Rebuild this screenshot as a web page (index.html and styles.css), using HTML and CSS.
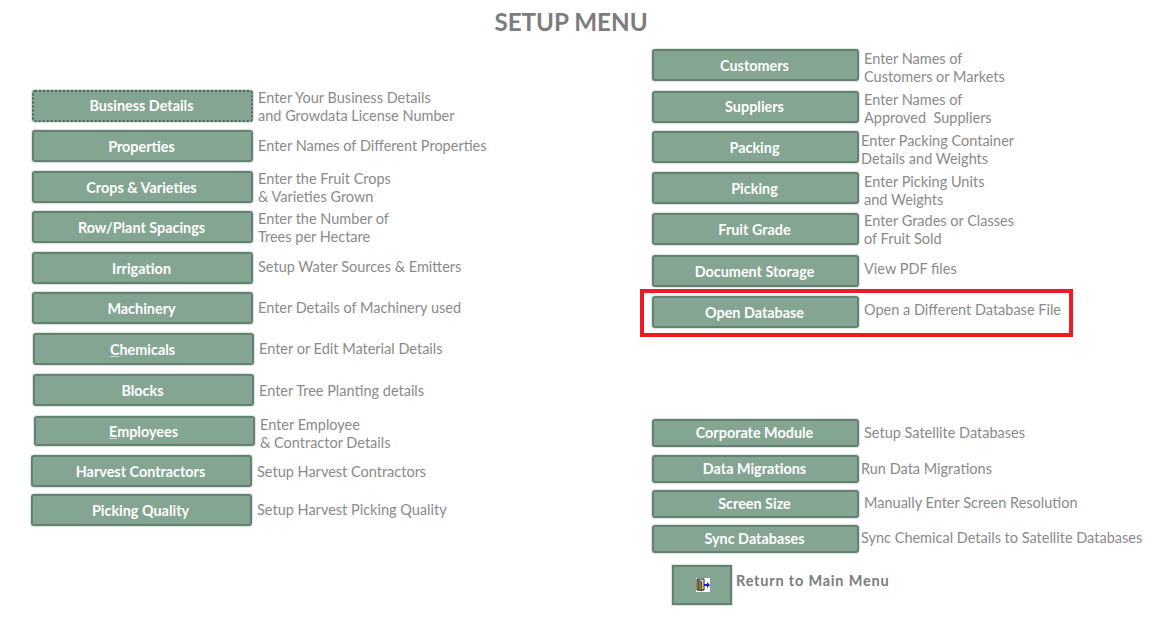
FILE: index.html
```html
<!DOCTYPE html>
<html lang="en">
<head>
<meta charset="utf-8">
<title>Setup Menu</title>
<link rel="stylesheet" href="styles.css">
</head>
<body>
<h1 class="title">SETUP MENU</h1>
<main class="columns">
  <section class="col col-left">
    <div class="row gap-0"><button class="btn btn-focus">Business Details</button><p class="desc down-1">Enter Your Business Details<br>and Growdata License Number</p></div>
    <div class="row gap-8"><button class="btn">Properties</button><p class="desc">Enter Names of Different Properties</p></div>
    <div class="row gap-9"><button class="btn">Crops &amp; Varieties</button><p class="desc down-1">Enter the Fruit Crops<br>&amp; Varieties Grown</p></div>
    <div class="row gap-8"><button class="btn">Row/Plant Spacings</button><p class="desc down-1">Enter the Number of<br>Trees per Hectare</p></div>
    <div class="row gap-9"><button class="btn">Irrigation</button><p class="desc up-1">Setup Water Sources &amp; Emitters</p></div>
    <div class="row gap-8"><button class="btn">Machinery</button><p class="desc">Enter Details of Machinery used</p></div>
    <div class="row gap-9 shift-1"><button class="btn"><u>C</u>hemicals</button><p class="desc">Enter or Edit Material Details</p></div>
    <div class="row gap-9 shift-1"><button class="btn">Blocks</button><p class="desc down-1">Enter Tree Planting details</p></div>
    <div class="row row-short gap-10 shift-2"><button class="btn"><u>E</u>mployees</button><p class="desc down-3">Enter Employee<br>&amp; Contractor Details</p></div>
    <div class="row gap-9 shift-back"><button class="btn">Harvest Contractors</button><p class="desc down-1">Setup Harvest Contractors</p></div>
    <div class="row gap-7 shift-back"><button class="btn">Picking Quality</button><p class="desc">Setup Harvest Picking Quality</p></div>
  </section>
  <section class="col col-right">
    <div class="row gap-0"><button class="btn">Customers</button><p class="desc down-3">Enter Names of<br>Customers or Markets</p></div>
    <div class="row gap-10"><button class="btn btn-raised">Suppliers</button><p class="desc down-2">Enter Names of<br>Approved&nbsp; Suppliers</p></div>
    <div class="row gap-8"><button class="btn">Packing</button><p class="desc tight down-3">Enter Packing Container<br>Details and Weights</p></div>
    <div class="row gap-9"><button class="btn">Picking</button><p class="desc down-3">Enter Picking Units<br>and Weights</p></div>
    <div class="row gap-9"><button class="btn">Fruit Grade</button><p class="desc down-1">Enter Grades or Classes<br>of Fruit Sold</p></div>
    <div class="row gap-10"><button class="btn">Document Storage</button><p class="desc up-2">View PDF files</p></div>
    <div class="row gap-9 row-flagged"><button class="btn">Open Database</button><p class="desc up-2">Open a Different Database File</p></div>
    <div class="row row-low gap-91"><button class="btn">Corporate Module</button><p class="desc">Setup Satellite Databases</p></div>
    <div class="row row-low gap-8"><button class="btn">Data Migrations</button><p class="desc tight">Run Data Migrations</p></div>
    <div class="row row-low gap-7"><button class="btn">Screen Size</button><p class="desc up-1">Manually Enter Screen Resolution</p></div>
    <div class="row row-low gap-7"><button class="btn">Sync Databases</button><p class="desc tight up-1">Sync Chemical Details to Satellite Databases</p></div>
    <div class="return-row">
      <button class="btn btn-icon" aria-label="Return to Main Menu">
        <svg class="door" width="14" height="14" viewBox="0 0 14 14">
          <rect width="14" height="14" fill="#fff"/>
          <path d="M1 1h7v11H1z" fill="#fff" stroke="#111" stroke-width="1"/>
          <path d="M2 2l4 1.5V13L2 11.5z" fill="#8a7a1a" stroke="#222" stroke-width=".6"/>
          <path d="M8 6h3V4l3 3-3 3V8H8z" fill="#1a22c8"/>
        </svg>
      </button>
      <span class="return-label">Return to Main Menu</span>
    </div>
  </section>
</main>
</body>
</html>
```
FILE: styles.css
```css
* { box-sizing: border-box; }
html, body { margin: 0; padding: 0; background: #fff; overflow: hidden; }
body { width: 1158px; height: 621px; font-family: "Lato", "Liberation Sans", sans-serif; }

.title {
  margin: 0;
  height: 46px;
  padding: 6px 16px 0 0;
  text-align: center;
  font-size: 24.2px;
  line-height: 32px;
  font-weight: 700;
  color: #7c7c7c;
}

.columns { display: flex; align-items: flex-start; }
.col { display: flex; flex-direction: column; }
.col-left { width: 652px; padding: 44px 0 0 32px; }
.col-right { padding-top: 3px; }

.row { display: flex; align-items: center; height: 32px; position: relative; }
.row-low { height: 28px; }
.row-short { height: 30px; }
.gap-0 { margin-top: 0; }
.gap-7 { margin-top: 7px; }
.gap-8 { margin-top: 8px; }
.gap-9 { margin-top: 9px; }
.gap-10 { margin-top: 10px; }
.gap-91 { margin-top: 91px; }
.shift-1 { margin-left: 1px; }
.shift-2 { margin-left: 2px; }
.shift-back { margin-left: -1px; }

.btn {
  flex: none;
  width: 221px;
  height: 100%;
  margin: 0;
  padding: 1px 2px 0 0;
  background: #84a591;
  border: 2px solid #648270;
  border-radius: 3px;
  box-shadow: 0 0 0 1px #dbe4de;
  color: #fff;
  font: 700 14.4px/18px "Lato", "Liberation Sans", sans-serif;
  text-align: center;
}
.col-right .btn { width: 207px; }
.btn u { text-decoration-color: #c8d6cd; }
.btn-focus { border: 2px dotted #4f6b5b; padding-top: 0; }
.btn-raised, .row-low .btn { padding-top: 0; }

.desc {
  margin: 0 0 0 5px;
  font-size: 14.5px;
  line-height: 18px;
  color: #8a8a8a;
  white-space: nowrap;
}
.tight { margin-left: 2px; }
.down-1 { margin-top: 2px; }
.down-2 { margin-top: 4px; }
.down-3 { margin-top: 6px; }
.up-1 { margin-bottom: 2px; }
.up-2 { margin-bottom: 4px; }

.row-flagged::after {
  content: "";
  box-sizing: border-box;
  position: absolute;
  left: -12px;
  top: -7px;
  width: 433px;
  height: 48px;
  border: 4px solid #ed1c24;
  pointer-events: none;
}

.return-row { display: flex; align-items: flex-start; margin: 12px 0 0 20px; }
.col-right .btn-icon {
  width: 60px;
  height: 40px;
  border-radius: 0;
  display: flex;
  align-items: center;
  justify-content: center;
  padding: 0 0 0 2px;
}
.door { display: block; }
.return-label {
  margin: 7px 0 0 4px;
  font-size: 14.5px;
  line-height: 18px;
  font-weight: 700;
  color: #7c7c7c;
  letter-spacing: .8px;
}
```
